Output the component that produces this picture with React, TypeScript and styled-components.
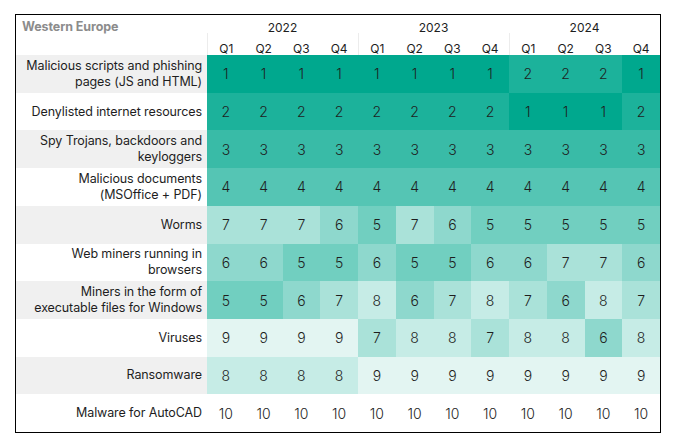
import React from "react";
import styled, { createGlobalStyle } from "styled-components";

const Global = createGlobalStyle`
  html, body { margin: 0; padding: 0; background: #ffffff; }
  body { font-family: "Inter", "Noto Sans", sans-serif; color: #1e1e1e; }
`;

const Page = styled.div`
  padding: 14px 15px 0 15px;
`;

const Frame = styled.div`
  width: 646px;
  height: 419px;
  box-sizing: border-box;
  border: 1px solid #000;
  display: grid;
  grid-template-columns: 191px repeat(12, 1fr);
  grid-template-rows: 18px 22px repeat(10, 1fr);
`;

const Title = styled.div`
  grid-column: 1;
  grid-row: 1 / span 2;
  font-weight: 700;
  font-size: 12.5px;
  line-height: 16px;
  color: #8c8c8c;
  padding: 4px 0 0 6px;
  letter-spacing: -0.1px;
`;

const Year = styled.div<{ $col: number }>`
  grid-row: 1;
  grid-column: ${(p) => p.$col} / span 4;
  font-size: 12px;
  line-height: 14px;
  text-align: center;
  padding-top: 6px;
`;

const Quarter = styled.div<{ $first: boolean }>`
  grid-row: 2;
  font-size: 12px;
  line-height: 14px;
  text-align: center;
  padding-top: 9px;
  border-left: ${(p) => (p.$first ? "1px solid #ececec" : "none")};
`;

const Label = styled.div<{ $shade: boolean }>`
  background: ${(p) => (p.$shade ? "#f0f0f0" : "#ffffff")};
  display: flex;
  align-items: center;
  justify-content: flex-end;
  text-align: right;
  padding-right: 5px;
  font-size: 12.5px;
  line-height: 16px;
  letter-spacing: -0.1px;
`;

const Cell = styled.div<{ $bg: string }>`
  background: ${(p) => p.$bg};
  display: flex;
  align-items: center;
  justify-content: center;
  font-size: 14px;
  font-weight: 300;
  color: #1e1e1e;
`;

const rows: { label: string[]; values: number[] }[] = [
  { label: ["Malicious scripts and phishing", "pages (JS and HTML)"], values: [1, 1, 1, 1, 1, 1, 1, 1, 2, 2, 2, 1] },
  { label: ["Denylisted internet resources"], values: [2, 2, 2, 2, 2, 2, 2, 2, 1, 1, 1, 2] },
  { label: ["Spy Trojans, backdoors and", "keyloggers"], values: [3, 3, 3, 3, 3, 3, 3, 3, 3, 3, 3, 3] },
  { label: ["Malicious documents", "(MSOffice + PDF)"], values: [4, 4, 4, 4, 4, 4, 4, 4, 4, 4, 4, 4] },
  { label: ["Worms"], values: [7, 7, 7, 6, 5, 7, 6, 5, 5, 5, 5, 5] },
  { label: ["Web miners running in", "browsers"], values: [6, 6, 5, 5, 6, 5, 5, 6, 6, 7, 7, 6] },
  { label: ["Miners in the form of", "executable files for Windows"], values: [5, 5, 6, 7, 8, 6, 7, 8, 7, 6, 8, 7] },
  { label: ["Viruses"], values: [9, 9, 9, 9, 7, 8, 8, 7, 8, 8, 6, 8] },
  { label: ["Ransomware"], values: [8, 8, 8, 8, 9, 9, 9, 9, 9, 9, 9, 9] },
  { label: ["Malware for AutoCAD"], values: [10, 10, 10, 10, 10, 10, 10, 10, 10, 10, 10, 10] },
];

function shade(rank: number): string {
  const t = (rank - 1) / 9;
  const r = Math.round(255 * t);
  const g = Math.round(168 + 87 * t);
  const b = Math.round(142 + 113 * t);
  return `rgb(${r}, ${g}, ${b})`;
}

const years = ["2022", "2023", "2024"];
const quarters = ["Q1", "Q2", "Q3", "Q4"];

export default function App() {
  return (
    <Page>
      <Global />
      <Frame>
        <Title>Western Europe</Title>
        {years.map((y, i) => (
          <Year key={y} $col={2 + i * 4}>{y}</Year>
        ))}
        {years.map((y) =>
          quarters.map((q, qi) => (
            <Quarter key={y + q} $first={qi === 0}>{q}</Quarter>
          ))
        )}
        {rows.map((row, ri) => (
          <React.Fragment key={ri}>
            <Label $shade={ri % 2 === 0}>
              <span>
                {row.label.map((line, li) => (
                  <React.Fragment key={li}>
                    {li > 0 && <br />}
                    {line}
                  </React.Fragment>
                ))}
              </span>
            </Label>
            {row.values.map((v, vi) => (
              <Cell key={vi} $bg={shade(v)}>{v}</Cell>
            ))}
          </React.Fragment>
        ))}
      </Frame>
    </Page>
  );
}
